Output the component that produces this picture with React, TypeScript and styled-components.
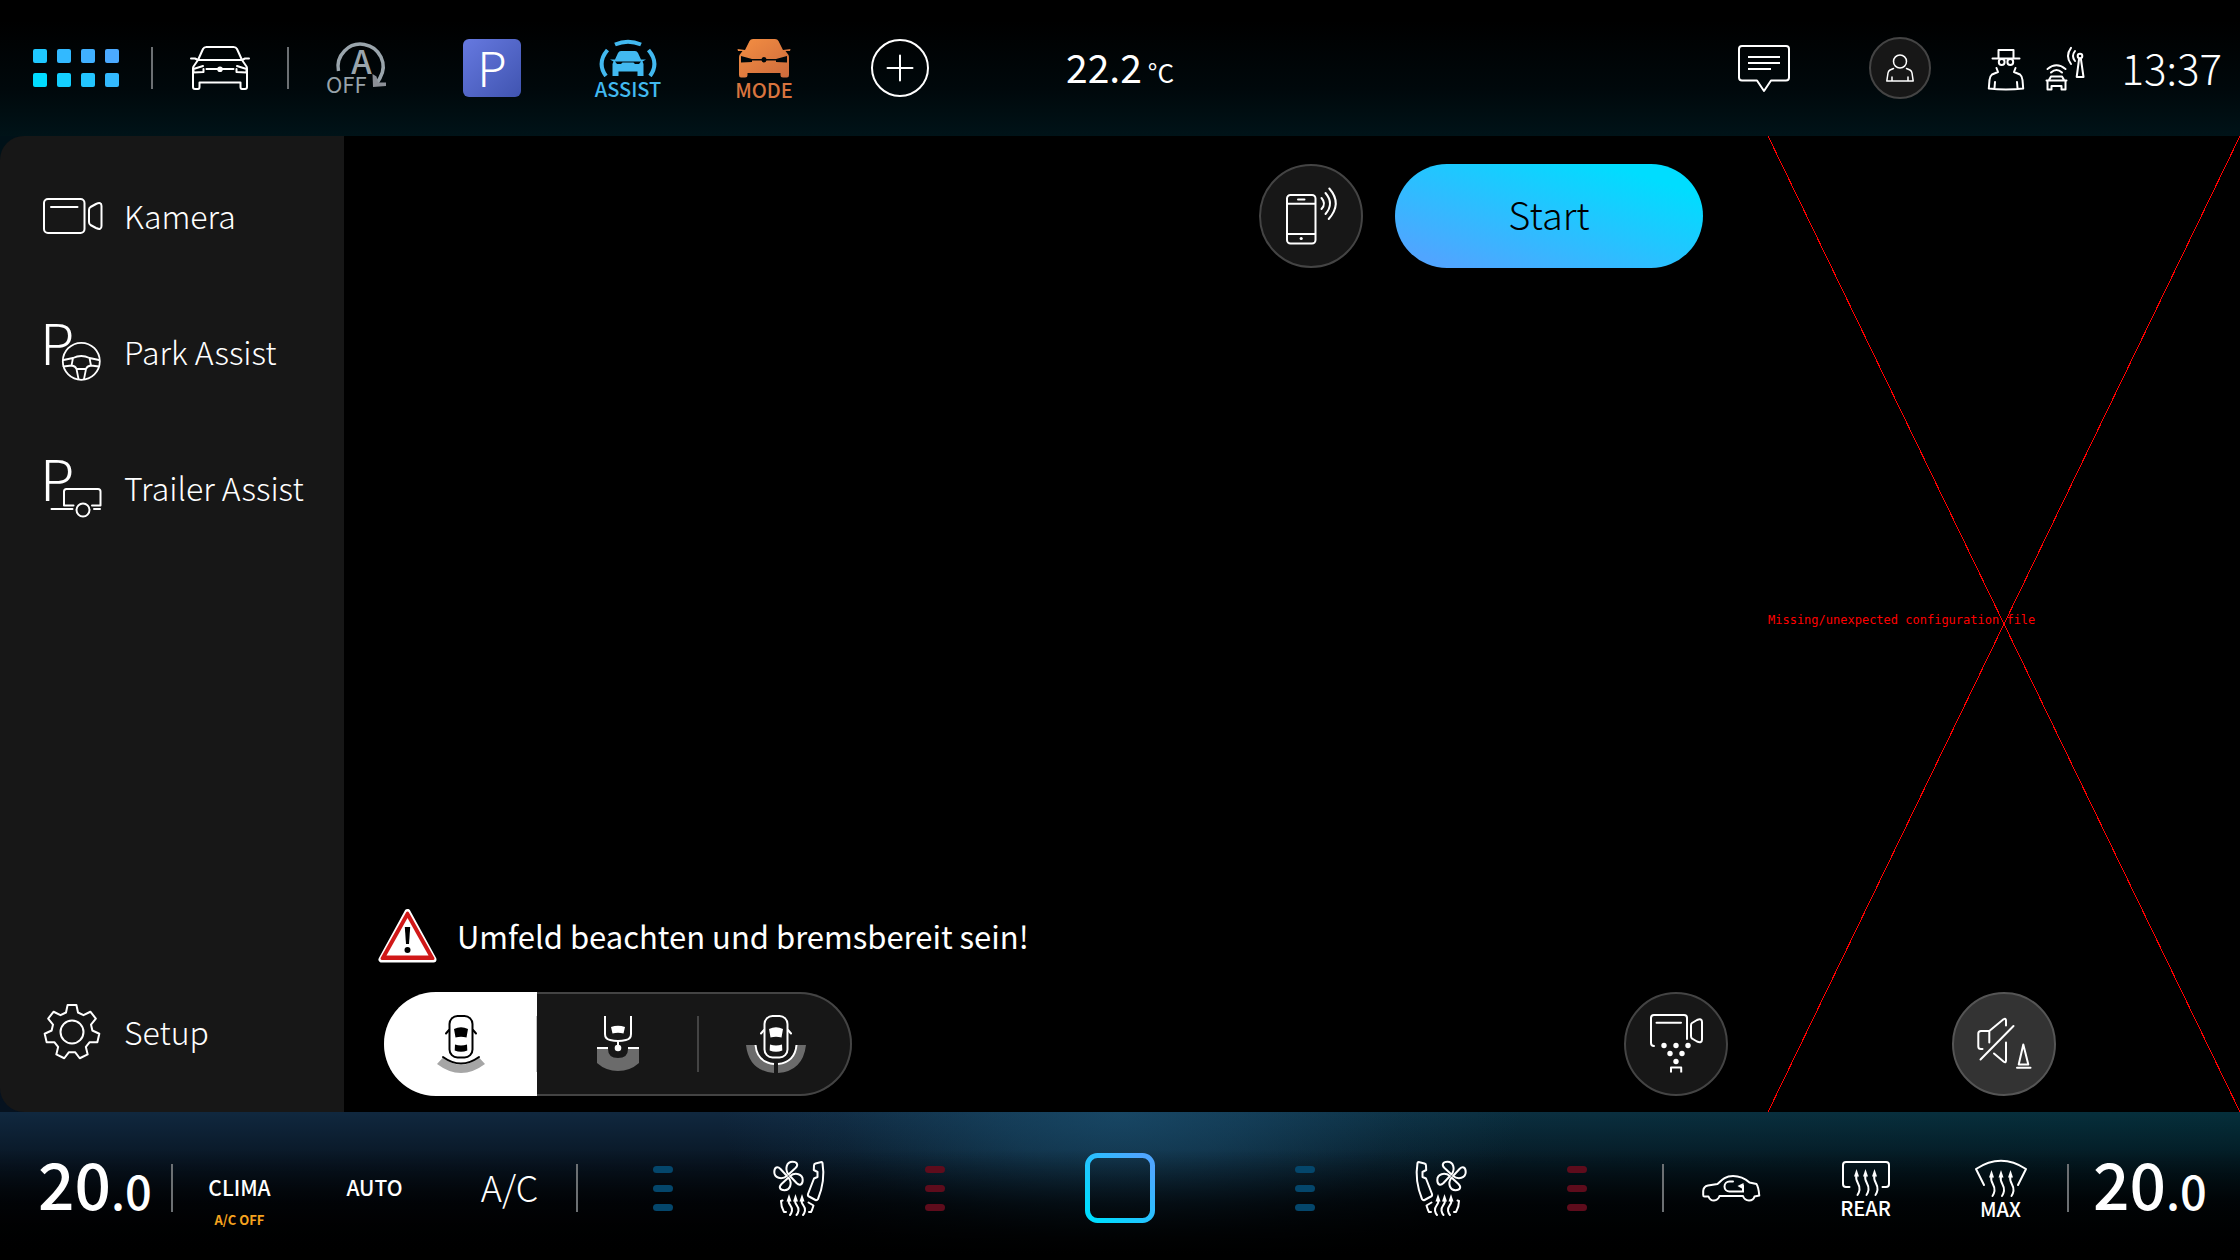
import React, { useState } from "react";
import styled, { createGlobalStyle, css } from "styled-components";

const GlobalStyle = createGlobalStyle`
  *, *::before, *::after { box-sizing: border-box; }
  body { margin: 0; background: #000; }
  button { appearance: none; border: 0; padding: 0; margin: 0; background: none; color: inherit; font: inherit; cursor: pointer; }
  svg { display: block; flex: none; }
`;

const Screen = styled.div`
  display: grid;
  grid-template-rows: auto 1fr auto;
  min-height: 100vh;
  color: #fff;
  font-family: "Noto Sans CJK JP", "Noto Sans", sans-serif;
  font-weight: 300;
`;

/* ---------- top bar ---------- */

const TopBar = styled.header`
  display: grid;
  grid-template-columns: 1fr auto 1fr;
  align-items: center;
  height: 136px;
  background: linear-gradient(#000 15%, #00080b 65%, #001318);
`;

const BarSide = styled.div<{ $end?: boolean }>`
  display: flex;
  align-items: center;
  justify-content: ${(p) => (p.$end ? "flex-end" : "flex-start")};
`;

const Divider = styled.span<{ $height: number }>`
  width: 2px;
  height: ${(p) => p.$height}px;
  margin: 0 -1px;
  background: #6c7073;
`;

const Cell = styled.button<{ $width?: number }>`
  display: flex;
  flex-direction: column;
  align-items: center;
  justify-content: center;
  gap: 4px;
  width: ${(p) => p.$width ?? 136}px;
  height: 96px;
`;

const AppGrid = styled.span`
  display: grid;
  grid-template-columns: repeat(4, 14px);
  gap: 10px;
`;

const AppDot = styled.span<{ $color: string }>`
  height: 14px;
  border-radius: 2px;
  background: ${(p) => p.$color};
`;

const ParkTile = styled.span`
  display: flex;
  align-items: center;
  justify-content: center;
  width: 58px;
  height: 58px;
  padding-bottom: 4px;
  border-radius: 6px;
  background: linear-gradient(135deg, #6679e0, #4054b0);
  font-size: 48px;
  line-height: 54px;
`;

const Caption = styled.span<{ $color?: string }>`
  color: ${(p) => p.$color ?? "#fff"};
  font-size: 20px;
  font-weight: 500;
  line-height: 16px;
`;

const Outside = styled.div`
  display: flex;
  align-items: baseline;
  gap: 6px;
  padding-top: 2px;
  font-size: 39px;
  font-weight: 400;
  line-height: 48px;
`;

const Unit = styled.span`
  font-size: 26px;
`;

const Avatar = styled.span`
  display: flex;
  align-items: center;
  justify-content: center;
  width: 62px;
  height: 62px;
  border: 2px solid #444;
  border-radius: 50%;
  background: #171717;
`;

const StatusIcons = styled.div`
  display: flex;
  align-items: center;
  gap: 22px;
  padding: 0 38px 0 20px;
`;

const Clock = styled.time`
  padding: 0 18px 2px 0;
  font-size: 42px;
  line-height: 48px;
`;

/* ---------- middle ---------- */

const Middle = styled.main`
  display: grid;
  grid-template-columns: 344px 1fr 472px;
  background: linear-gradient(#001118, #06121f);
`;

const SideMenu = styled.nav`
  display: flex;
  flex-direction: column;
  padding: 12px 0;
  border-radius: 24px 0 0 24px;
  background: #171717;
`;

const MenuItem = styled.button<{ $last?: boolean }>`
  display: flex;
  align-items: center;
  gap: 21px;
  height: 136px;
  padding-left: 43px;
  font-size: 32px;
  line-height: 48px;
  ${(p) => p.$last && css`margin-top: auto;`}
`;

const MenuLabel = styled.span`
  padding-bottom: 2px;
`;

const Stage = styled.section`
  display: flex;
  flex-direction: column;
  justify-content: space-between;
  padding: 28px 40px 16px;
  background: #000;
`;

const StageTop = styled.div`
  display: flex;
  justify-content: flex-end;
  gap: 32px;
  padding-right: 25px;
`;

const StageBottom = styled.div`
  display: flex;
  align-items: flex-end;
  justify-content: space-between;
`;

const RoundButton = styled.button<{ $active?: boolean }>`
  display: flex;
  align-items: center;
  justify-content: center;
  width: 104px;
  height: 104px;
  border: 2px solid ${(p) => (p.$active ? "#555" : "#444")};
  border-radius: 50%;
  background: ${(p) => (p.$active ? "#333" : "#171717")};
`;

const StartButton = styled.button`
  width: 308px;
  height: 104px;
  padding-bottom: 4px;
  border-radius: 52px;
  background: linear-gradient(to top right, #50a5ff 10%, #00ddff 85%);
  color: #000;
  font-size: 38px;
  line-height: 48px;
`;

const Controls = styled.div`
  display: flex;
  flex-direction: column;
  gap: 29px;
`;

const Warning = styled.p`
  display: flex;
  align-items: center;
  gap: 20px;
  margin: 0 0 0 -6px;
  font-size: 31px;
  font-weight: 400;
  line-height: 54px;
`;

const Segments = styled.div`
  display: grid;
  grid-template-columns: 153px 162px 153px;
  width: 468px;
  height: 104px;
  border-radius: 52px;
  background: #171717;
  box-shadow: inset 0 0 0 2px #444;
  overflow: hidden;
`;

const Segment = styled.button<{ $selected: boolean }>`
  display: flex;
  align-items: center;
  justify-content: center;
  background: ${(p) =>
    p.$selected
      ? "linear-gradient(#c4c4c4, #c4c4c4) right center / 1px 56px no-repeat #fff"
      : "linear-gradient(#444, #444) right center / 2px 56px no-repeat"};
  color: ${(p) => (p.$selected ? "#000" : "#fff")};
  &:last-child { background-size: 0 0; }
`;

const MissingPanel = styled.section`
  position: relative;
  display: grid;
  grid-template-rows: 1fr 1fr;
  justify-items: center;
  background: #000;
`;

const Cross = styled.svg`
  position: absolute;
  inset: 0;
  width: 100%;
  height: 100%;
`;

const ErrorText = styled.p`
  position: relative;
  align-self: end;
  justify-self: start;
  margin: 0;
  color: #f00;
  font-family: "DejaVu Sans Mono", monospace;
  font-size: 12px;
  font-weight: 400;
  line-height: 8px;
`;

const PanelAction = styled.div`
  position: relative;
  align-self: end;
  padding-bottom: 16px;
`;

/* ---------- climate bar ---------- */

const ClimateBar = styled.footer`
  display: grid;
  grid-template-columns: 1fr auto 1fr;
  align-items: center;
  height: 148px;
  padding-top: 4px;
  background:
    linear-gradient(transparent 25%, rgba(0, 0, 0, 0.6) 62%, #000 96%),
    radial-gradient(ellipse 400px 190px at 50% 0, rgba(28, 82, 116, 0.7), rgba(28, 82, 116, 0.5) 30%, rgba(28, 82, 116, 0.15) 70%, transparent),
    linear-gradient(transparent, rgba(0, 2, 6, 0.85) 62%, #000),
    linear-gradient(90deg, #10283f, #10283f 35%, #0b2f40 65%, #052f3b);
`;

const Temperature = styled.button`
  display: flex;
  align-items: baseline;
  justify-content: center;
  width: 172px;
  padding: 0 0 4px 18px;
  font-size: 64px;
  font-weight: 500;
  line-height: 72px;
`;

const TemperatureRight = styled(Temperature)`
  padding: 0 8px 4px 0;
`;

const Decimal = styled.span`
  font-size: 47px;
`;

const ClimateCell = styled.button`
  display: grid;
  grid-template-rows: 1fr auto 1fr;
  justify-items: center;
  width: 135px;
  height: 96px;
  font-size: 21px;
  font-weight: 500;
  line-height: 24px;
`;

const CellLabel = styled.span<{ $large?: boolean }>`
  grid-row: 2;
  padding-bottom: 2px;
  ${(p) => p.$large && css`padding-bottom: 4px; font-size: 36px; font-weight: 300; line-height: 48px;`}
`;

const CellNote = styled.span`
  grid-row: 3;
  padding-top: 4px;
  color: #f5a31f;
  font-size: 13px;
  font-weight: 700;
  line-height: 30px;
`;

const SeatGroup = styled.div<{ $right?: boolean }>`
  display: flex;
  ${(p) => (p.$right ? css`margin: 0 auto 0 82px;` : css`margin: 0 82px 0 auto;`)}
`;

const Levels = styled.span`
  display: grid;
  gap: 12px;
`;

const Level = styled.span<{ $color: string }>`
  width: 20px;
  height: 7px;
  border-radius: 4px;
  background: ${(p) => p.$color};
`;

const HomeButton = styled.button`
  width: 70px;
  height: 70px;
  border-radius: 12px;
`;

/* ---------- drawings ---------- */

type IconProps = { w: number; h: number; sw?: number; children: React.ReactNode };

const Icon = ({ w, h, sw = 2, children }: IconProps) => (
  <svg
    width={w}
    height={h}
    viewBox={`0 0 ${w} ${h}`}
    fill="none"
    stroke="currentColor"
    strokeWidth={sw}
    strokeLinecap="round"
    strokeLinejoin="round"
    aria-hidden="true"
    overflow="visible"
  >
    {children}
  </svg>
);

const CarIcon = () => (
  <Icon w={60} h={44}>
    <path d="M8 14 13 3Q14 1 16.500 1H43.500Q46 1 47 3L52 14" />
    <path d="M8 14H52M1 12.500H5L8 14 3.500 20.500Q3 21.500 3 23V41Q3 43 5 43H8Q9.500 43 9.500 41V36.500H50.500V41Q50.500 43 52 43H55Q57 43 57 41V23Q57 21.500 56.500 20.500L52 14 55 12.500H59" />
    <path d="M13 20 3.500 23V26.500L13.500 26V23M46.500 23V26L56.500 26.500V23L47 20M16.500 23H43.500" />
    <circle cx="30" cy="23.300" r="2.800" fill="currentColor" stroke="none" />
  </Icon>
);

const StartStopIcon = () => (
  <svg width="60" height="56" viewBox="0 0 60 56" overflow="visible" aria-hidden="true">
    <path d="M12.500 31A22.500 22.500 0 1 1 54 38L51 43" fill="none" stroke="#9aa5ac" strokeWidth="3.500" />
    <path d="M46.500 34 50.500 36.500 52 42.500 60 42.500V46L47 47Z" fill="#8c9097" />
    <text x="35.500" y="34" textAnchor="middle" fontSize="33" fontWeight="500" fill="#9aa5ac">A</text>
    <text x="0" y="53" fontSize="22" fontWeight="400" fill="#98a3aa">OFF</text>
  </svg>
);

const AssistIcon = () => (
  <svg width="60" height="38" viewBox="0 0 60 38" fill="none" aria-hidden="true">
    <g stroke="#42b9f0" strokeWidth="4">
      <path d="M17 5.500Q30 0 43 5.500M9.500 11Q-1.500 24 8 37M50.500 11Q61.500 24 52 37" />
    </g>
    <path
      d="M23 12H37Q39 12 40 14L43 20.500H48L44.500 22.500 45.500 25V37H39.500V32.500H20.500V37H14.500V25L15.500 22.500 12 20.500H17L20 14Q21 12 23 12Z"
      fill="#42b9f0"
    />
    <path d="M17 22.500H43L41 25H37L35.500 23.500H24.500L23 25H19Z" fill="#00070a" />
  </svg>
);

const ModeIcon = () => (
  <svg width="56" height="40" viewBox="0 0 56 40" aria-hidden="true">
    <defs>
      <linearGradient id="amber" x1="0" y1="0" x2="1" y2="1">
        <stop offset="0" stopColor="#f58f42" />
        <stop offset="1" stopColor="#cc6a3c" />
      </linearGradient>
    </defs>
    <path
      d="M17 1H39Q41.500 1 42.500 3L47 12 54.500 11 54 13H49.500L52.500 17Q53 18 53 20V37Q53 39.500 51 39.500H47Q44.500 39.500 44.500 37V35H11.500V37Q11.500 39.500 9 39.500H5Q3 39.500 3 37V20Q3 18 3.500 17L6.500 13H2L1.500 11 9 12 13.500 3Q14.500 1 17 1Z"
      fill="url(#amber)"
    />
    <path d="M5 18 16 21H25.500A2.600 2.600 0 0 1 30.500 21H40L51 18V24.500L40 24V22.500H30.500A2.600 2.600 0 0 1 25.500 22.500H16V24L5 24.500Z" fill="#00070a" />
  </svg>
);

const AddIcon = () => (
  <Icon w={58} h={58}>
    <circle cx="29" cy="29" r="28" />
    <path d="M16.500 29H41.500M29 16.500V41.500" />
  </Icon>
);

const MessageIcon = () => (
  <Icon w={52} h={46}>
    <path d="M4 1H48Q51 1 51 4V32.500Q51 35.500 48 35.500H33L26 46 19 35.500H4Q1 35.500 1 32.500V4Q1 1 4 1Z" />
    <path d="M10 12H42M10 18H42M10 24H33" strokeLinecap="butt" />
  </Icon>
);

const UserIcon = () => (
  <Icon w={28} h={28} sw={1.5}>
    <circle cx="14" cy="7.500" r="6.500" />
    <path d="M7.500 14.500 4 16Q2.300 17 2 19L.800 27H27.200L26 19Q25.700 17 24 16L20.500 14.500M6 23V26.500M22 23V26.500" />
  </Icon>
);

const IncognitoIcon = () => (
  <Icon w={36} h={42}>
    <path d="M10.500 11V3H25.500V11M4.500 11.500H31.500" />
    <circle cx="13.700" cy="15" r="2.900" />
    <circle cx="22.300" cy="15" r="2.900" />
    <path d="M8.500 21 10 25 4 27.500Q2 29 1.500 33L.800 41.500Q18 43.500 35.200 41.500L34.500 33Q34 29 32 27.500L26 25 27.500 21M7 35 6.500 41M29 35 29.500 41" />
  </Icon>
);

const CarSignalIcon = () => (
  <Icon w={38} h={43}>
    <path d="M1.500 22Q10.500 14.500 19.500 22M5 25.500Q10.500 20.500 16 25.500M3 33 5 29.500H16L18 33M.500 33.500H20.500M1.500 34V42.500H5.500V39H15.500V42.500H19.500V34" />
    <circle cx="34" cy="9" r="2.300" />
    <path d="M33 12.500 30.700 30H37.500L35 12.500M29 4Q25 9 29 14M25 .800Q19 9 25 17" />
  </Icon>
);

const CameraIcon = () => (
  <Icon w={60} h={36}>
    <rect x="1" y="1" width="40.500" height="34" rx="4" />
    <path d="M8 9H34.500" />
    <path d="M47.500 9 53 6Q58.500 3.500 58.500 8V28Q58.500 32.500 53 30L47.500 27Q46 26 46 24V12Q46 10 47.500 9Z" />
  </Icon>
);

const ParkAssistIcon = () => (
  <Icon w={60} h={60} sw={1.8}>
    <text x="-3" y="43" fontSize="56" fontWeight="300" fill="currentColor" stroke="none">P</text>
    <circle cx="38.300" cy="39.300" r="18.500" fill="#171717" />
    <path d="M30 36Q38.300 32 46.500 36L48 43.500Q44 44 43 47H33.500Q32.500 44 28.500 43.500ZM20.500 38 30 36M46.500 36 56 38M20.500 44.500 28.500 43.500M56 44.500 48 43.500M33.500 47 35.500 57M43 47 41 57" />
  </Icon>
);

const TrailerIcon = () => (
  <Icon w={60} h={60}>
    <text x="-3" y="43" fontSize="56" fontWeight="300" fill="currentColor" stroke="none">P</text>
    <path d="M30.500 47.500H21V33.500Q21 31 23.500 31H55Q57.500 31 57.500 33.500V47.500H49M8.500 51H29.500M51 51H57" />
    <circle cx="40" cy="52" r="6.500" />
  </Icon>
);

const gearPath = Array.from({ length: 7 }, (_, i) => {
  const a = (i * 2 * Math.PI) / 7;
  return [[-6, -19.5], [-4.4, -27], [4.4, -27], [6, -19.5]]
    .map(([x, y]) => {
      const px = 29 + x * Math.cos(a) - y * Math.sin(a);
      const py = 30 + x * Math.sin(a) + y * Math.cos(a);
      return `${px.toFixed(2)} ${py.toFixed(2)}`;
    })
    .join("L");
}).join("L");

const GearIcon = () => (
  <Icon w={60} h={60}>
    <path d={`M${gearPath}Z`} />
    <circle cx="29" cy="30" r="11.500" />
  </Icon>
);

const PhoneIcon = () => (
  <Icon w={50} h={58}>
    <rect x="1" y="8" width="28.500" height="48.500" rx="3.500" />
    <path d="M1 16.700H29M1 47H29M12 12.500H18.500M35.500 11Q40.500 16.500 35.500 22M39.500 6Q48.500 16.500 39.500 27M43.300 1.500Q56.500 16.500 42.700 32" />
    <circle cx="15.200" cy="51.500" r="1.600" fill="currentColor" stroke="none" />
  </Icon>
);

const WarningSign = () => (
  <svg width="59" height="54" viewBox="0 0 59 54" aria-hidden="true">
    <path d="M29.500 3 3.500 50.500H55.500Z" fill="#fff" stroke="#fff" strokeWidth="6" strokeLinejoin="round" />
    <path d="M29.500 4 4 49.500H55Z" fill="#d01818" stroke="#d01818" strokeWidth="3" strokeLinejoin="round" />
    <path d="M29.500 9 8.500 46.500H50.500Z" fill="#fff" />
    <path d="M26.800 18H32.200L31 35H28Z" fill="#000" />
    <circle cx="29.500" cy="41" r="3" fill="#000" />
  </svg>
);

const CarTop = ({ x }: { x: number }) => (
  <g transform={`translate(${x} 0)`}>
    <rect x="-11.500" y="1" width="23" height="41.500" rx="8" />
    <path d="M-12 15-15 18.500M12 15 15 18.500" />
    <path d="M-7 14Q0 10.500 7 14L5.500 22.500Q0 21 -5.500 22.500ZM-6 29.500Q0 31.500 6 29.500L6.300 35.500Q0 38 -6.300 35.500Z" fill="currentColor" stroke="none" />
  </g>
);

const RearViewIcon = () => (
  <Icon w={48} h={58}>
    <path d="M6 42.500 0 49Q24 67 48 49L42 42.500Q24 57 6 42.500Z" fill="#a6a6a6" stroke="none" />
    <path d="M6 42Q24 55 42 42" />
    <CarTop x={24} />
  </Icon>
);

const HitchViewIcon = () => (
  <Icon w={42} h={58}>
    <path d="M0 34H11Q11 43 21 43T31 34H42V48Q33 56 21 56T0 48Z" fill="#6b6b6b" stroke="none" />
    <path d="M8 1V19Q8 24 13 25 21 27 29 25 34 24 34 19V1M21 26V32M0 33H11M31 33H42" strokeLinecap="butt" />
    <path d="M14 12Q21 9.500 28 12L26.500 18.500Q21 17 15.500 18.500Z" fill="currentColor" stroke="none" />
    <circle cx="21" cy="33" r="3.300" fill="currentColor" stroke="none" />
  </Icon>
);

const SideViewIcon = () => (
  <Icon w={60} h={58}>
    <path d="M0 30H9Q11 47 28 49V58Q3 56 0 30ZM60 30H51Q49 47 32 49V58Q57 56 60 30Z" fill="#6b6b6b" stroke="none" />
    <path d="M9.500 30Q11 47 28 49M50.500 30Q49 47 32 49" strokeLinecap="butt" />
    <CarTop x={30} />
  </Icon>
);

const CameraWashIcon = () => (
  <Icon w={52} h={60}>
    <path d="M4 32Q1 32 1 29V4Q1 1 4 1H34Q37 1 37 4V25M6.500 8.700H31" />
    <path d="M42 9 47 6Q52 4 52 8V25.500Q52 29.500 47 27.500L42 24.500Q41 24 41 22V11.500Q41 9.700 42 9Z" />
    <path d="M21 58.500V53.500H31.200V58.500" strokeLinecap="butt" />
    <g fill="currentColor" stroke="none">
      {[[14, 31.5], [26, 31.5], [38, 31.5], [20, 39.5], [32, 39.5], [26, 47.5]].map(([x, y]) => (
        <circle key={`${x}-${y}`} cx={x} cy={y} r="2.700" />
      ))}
    </g>
  </Icon>
);

const MuteIcon = () => (
  <Icon w={54} h={52}>
    <path d="M5.500 31H4Q1.300 31 1.300 28.500V15.500Q1.300 13 4 13H12.300V24.500M12.300 13 26.500 1.300Q29 0 29 2.500V7.500M36.500 8 3.500 41.500M17 35.500 26.500 43.500Q29 45.500 29 42.500V24.500" />
    <path d="M46.300 26.500 41.700 46.500H51.300ZM40 49.800H53.500" />
  </Icon>
);

const HeatWave = ({ x, y, h = 26 }: { x: number; y: number; h?: number }) => (
  <g transform={`translate(${x} ${y})`}>
    <path d={`M0 6C-2 ${h * 0.5} 4 ${h * 0.55} 3 ${h * 0.8}Q2.500 ${h * 0.92} 1 ${h}`} />
    <path d="M0 0-2.500 7.500H2.500Z" fill="currentColor" stroke="none" />
  </g>
);

const SeatIcon = ({ flip }: { flip?: boolean }) => (
  <Icon w={50} h={54}>
    <g transform={flip ? "translate(50 0) scale(-1 1)" : undefined}>
      {[0, 90, 180, 270].map((a) => (
        <path key={a} d="M14.500 13.500C10.500 8 12.500 .800 18.500 .800 23.500 .800 24.500 4 21.500 7Z" transform={`rotate(${a} 14.500 15)`} />
      ))}
      <path d="M47.500 1 41.500 2.500Q40 3 40 4.500L39.800 9 43.500 11V16L40 17.500 34 33Q33.500 35 35 35.500L41.500 39Q43 39.500 44 38C48.500 27 50.500 14 48.500 2Q48.300 1 47.500 1Z" />
      <path d="M34.500 41.500 39.500 44.500 38 49 37 51H35M8.500 39.500 7 40Q7 46 10 51H12" />
      <HeatWave x={15} y={33} h={21} />
      <HeatWave x={21.5} y={33} h={21} />
      <HeatWave x={28} y={33} h={21} />
    </g>
  </Icon>
);

const RecirculateIcon = () => (
  <Icon w={58} h={26}>
    <path d="M6.500 21.500H2.500Q1.200 21.500 1.200 20V16Q1.500 11.500 6 10.500L15.500 9C19 6 22 1 31 1 39 1 43 3.500 47.500 7.500L54.500 9Q56.500 12 57.300 20.500L52.500 21.500C51 27 43 27 41 21H17.500C15.500 27 8.500 27 6.500 21.500Z" />
    <path d="M31 6.500H27.500A5 5 0 0 0 27.500 16.500H41V10.500" strokeLinejoin="miter" />
    <path d="M41.500 8V14.500L35.500 11Z" fill="currentColor" stroke="none" />
  </Icon>
);

const RearDefrostIcon = () => (
  <Icon w={48} h={35}>
    <path d="M7.500 26H4Q1 26 1 23V4Q1 1 4 1H44Q47 1 47 4V23Q47 26 44 26H40.500" />
    <HeatWave x={14.5} y={8} />
    <HeatWave x={23.5} y={8} />
    <HeatWave x={32.5} y={8} />
  </Icon>
);

const MaxDefrostIcon = () => (
  <Icon w={52} h={37}>
    <path d="M9 25 1 9Q26-7.500 51 9L43 25" />
    <HeatWave x={16.5} y={10} />
    <HeatWave x={26} y={10} />
    <HeatWave x={35.5} y={10} />
  </Icon>
);

const HomeFrame = () => (
  <svg width="70" height="70" viewBox="0 0 70 70" aria-hidden="true">
    <defs>
      <linearGradient id="frame" x1="0.100" y1="0.900" x2="0.900" y2="0.100">
        <stop offset="0" stopColor="#00dcff" />
        <stop offset="1" stopColor="#4ea6ff" />
      </linearGradient>
    </defs>
    <rect x="2.500" y="2.500" width="65" height="65" rx="10" fill="none" stroke="url(#frame)" strokeWidth="5" />
  </svg>
);

/* ---------- page ---------- */

const appColors = ["#1fc8ff", "#32b9ff", "#40b0ff", "#4baaff", "#00dcff", "#14cfff", "#22c5ff", "#33baff"];

const menu = [
  { label: "Kamera", icon: <CameraIcon /> },
  { label: "Park Assist", icon: <ParkAssistIcon /> },
  { label: "Trailer Assist", icon: <TrailerIcon /> },
];

const views = [
  { label: "Rückansicht", icon: <RearViewIcon /> },
  { label: "Anhängeransicht", icon: <HitchViewIcon /> },
  { label: "Seitenansicht", icon: <SideViewIcon /> },
];

const SeatControl = ({ label, color }: { label: string; color: string }) => (
  <Cell aria-label={label}>
    <Levels>
      {[0, 1, 2].map((n) => (
        <Level key={n} $color={color} />
      ))}
    </Levels>
  </Cell>
);

export default function App() {
  const [view, setView] = useState(0);

  return (
    <Screen>
      <GlobalStyle />
      <TopBar>
        <BarSide>
          <Cell $width={152} aria-label="Apps">
            <AppGrid>
              {appColors.map((color) => (
                <AppDot key={color} $color={color} />
              ))}
            </AppGrid>
          </Cell>
          <Divider $height={42} />
          <Cell aria-label="Fahrzeug"><CarIcon /></Cell>
          <Divider $height={42} />
          <Cell aria-label="Start-Stopp"><StartStopIcon /></Cell>
          <Cell><ParkTile>P</ParkTile></Cell>
          <Cell>
            <AssistIcon />
            <Caption $color="#42b9f0">ASSIST</Caption>
          </Cell>
          <Cell>
            <ModeIcon />
            <Caption $color="#d9743e">MODE</Caption>
          </Cell>
          <Cell aria-label="Hinzufügen"><AddIcon /></Cell>
        </BarSide>
        <Outside>22.2<Unit>°C</Unit></Outside>
        <BarSide $end>
          <Cell aria-label="Nachrichten"><MessageIcon /></Cell>
          <Cell aria-label="Benutzer"><Avatar><UserIcon /></Avatar></Cell>
          <StatusIcons>
            <IncognitoIcon />
            <CarSignalIcon />
          </StatusIcons>
          <Clock>13:37</Clock>
        </BarSide>
      </TopBar>

      <Middle>
        <SideMenu>
          {menu.map((item) => (
            <MenuItem key={item.label}>
              {item.icon}
              <MenuLabel>{item.label}</MenuLabel>
            </MenuItem>
          ))}
          <MenuItem $last>
            <GearIcon />
            <MenuLabel>Setup</MenuLabel>
          </MenuItem>
        </SideMenu>

        <Stage>
          <StageTop>
            <RoundButton aria-label="Telefon verbinden"><PhoneIcon /></RoundButton>
            <StartButton>Start</StartButton>
          </StageTop>
          <StageBottom>
            <Controls>
              <Warning><WarningSign />Umfeld beachten und bremsbereit sein!</Warning>
              <Segments>
                {views.map((v, i) => (
                  <Segment key={v.label} $selected={i === view} aria-pressed={i === view} aria-label={v.label} onClick={() => setView(i)}>
                    {v.icon}
                  </Segment>
                ))}
              </Segments>
            </Controls>
            <RoundButton aria-label="Kamera reinigen"><CameraWashIcon /></RoundButton>
          </StageBottom>
        </Stage>

        <MissingPanel>
          <Cross viewBox="0 0 100 100" preserveAspectRatio="none" stroke="#f00" shapeRendering="crispEdges" aria-hidden="true">
            <path d="M0 0 100 100M100 0 0 100" vectorEffect="non-scaling-stroke" />
          </Cross>
          <ErrorText>Missing/unexpected configuration file</ErrorText>
          <PanelAction>
            <RoundButton $active aria-label="Ton aus"><MuteIcon /></RoundButton>
          </PanelAction>
        </MissingPanel>
      </Middle>

      <ClimateBar>
        <BarSide>
          <Temperature>20<Decimal>.0</Decimal></Temperature>
          <Divider $height={48} />
          <ClimateCell>
            <CellLabel>CLIMA</CellLabel>
            <CellNote>A/C OFF</CellNote>
          </ClimateCell>
          <ClimateCell><CellLabel>AUTO</CellLabel></ClimateCell>
          <ClimateCell><CellLabel $large>A/C</CellLabel></ClimateCell>
          <Divider $height={48} />
          <SeatGroup>
            <SeatControl label="Sitzkühlung links" color="#04466b" />
            <Cell aria-label="Sitz links"><SeatIcon /></Cell>
            <SeatControl label="Sitzheizung links" color="#5e0c1c" />
          </SeatGroup>
        </BarSide>
        <HomeButton aria-label="Home"><HomeFrame /></HomeButton>
        <BarSide $end>
          <SeatGroup $right>
            <SeatControl label="Sitzkühlung rechts" color="#04466b" />
            <Cell aria-label="Sitz rechts"><SeatIcon flip /></Cell>
            <SeatControl label="Sitzheizung rechts" color="#5e0c1c" />
          </SeatGroup>
          <Divider $height={48} />
          <Cell $width={135} aria-label="Umluft"><RecirculateIcon /></Cell>
          <Cell $width={135}><RearDefrostIcon /><Caption>REAR</Caption></Cell>
          <Cell $width={135}><MaxDefrostIcon /><Caption>MAX</Caption></Cell>
          <Divider $height={48} />
          <TemperatureRight>20<Decimal>.0</Decimal></TemperatureRight>
        </BarSide>
      </ClimateBar>
    </Screen>
  );
}
